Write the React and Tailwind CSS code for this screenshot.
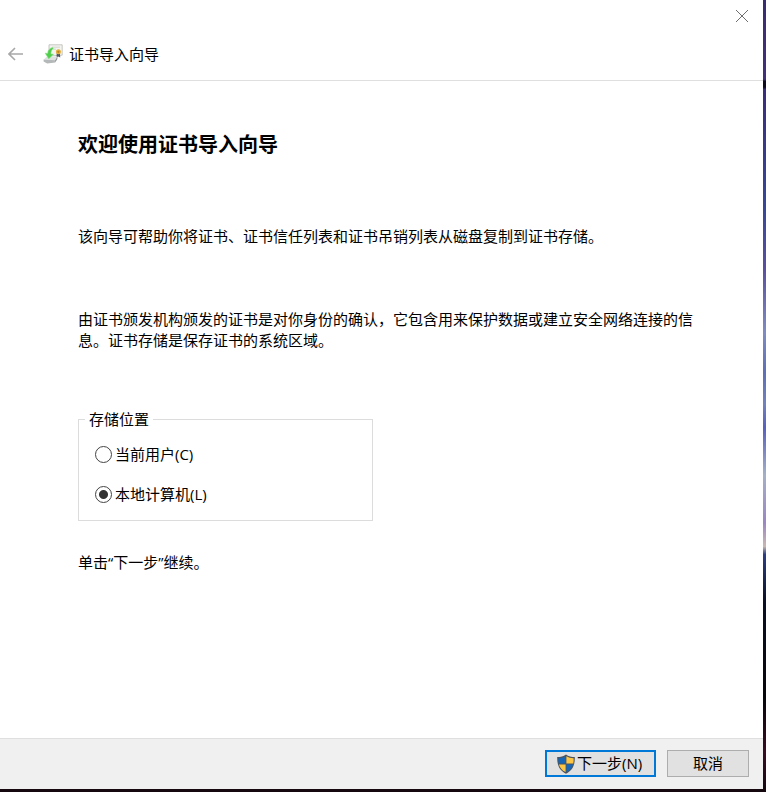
import { useState } from 'react';

const STORES = [
  { id: 'user', label: '当前用户(C)' },
  { id: 'machine', label: '本地计算机(L)' },
];

function BackIcon() {
  return (
    <svg className="w-4 h-4" viewBox="0 0 16 16" fill="none" stroke="#a8a8a8" strokeWidth="1.6">
      <path d="M15 8H1M7 2L1 8l6 6" />
    </svg>
  );
}

function CloseIcon() {
  return (
    <svg className="w-3 h-3" viewBox="0 0 12 12" fill="none" stroke="#6e6e6e" strokeWidth="1">
      <path d="M0 0l12 12M12 0L0 12" />
    </svg>
  );
}

// Certificate with a green import arrow over a drive
function CertificateIcon() {
  return (
    <svg className="w-5 h-5" viewBox="0 0 20 20">
      <path d="M6 .8h13.2v10.4L6 12z" fill="#f3f3ef" stroke="#b9b9b4" strokeWidth=".8" />
      <path d="M9 3.2h8M10 5.2h3" stroke="#c9c9c4" strokeWidth=".7" />
      <path d="M13.8 9l-.4 4.6 1.9-1.2 2 1.1-.5-4.5z" fill="#4e5663" />
      <circle cx="15.4" cy="7.8" r="2.5" fill="#e3ae3c" />
      <circle cx="15.4" cy="7.8" r="1.1" fill="#b98120" />
      <path d="M.6 15.4L4 12.4h10.4l-2.2 3.8z" fill="#dfe1e1" />
      <path d="M.6 15.4l11.6.8v2.4l-8 .8-3.6-2z" fill="#b4b8b9" />
      <path d="M12.2 16.2l2.2-3.8v2.6l-2.2 3.6z" fill="#8c9193" />
      <path d="M9.4 3.4C6.4 4.4 4.8 6.6 4.7 9.4l-2.5-.2 3.6 5.6 4.6-4.6-2.5-.1c-.1-2.500.7-4.300 2.300-5.500z" fill="#4fce4b" stroke="#7fdd7b" strokeWidth=".6" />
    </svg>
  );
}

function ShieldIcon() {
  return (
    <svg className="w-5 h-5 shrink-0" viewBox="0 0 20 20">
      <path d="M10 .4c2.6 1.9 5.4 2.6 8.8 2.7C19 10.8 16.6 16.6 10 19.7 3.4 16.6 1 10.8 1.2 3.1 4.6 3 7.4 2.3 10 .4z" fill="#4c5560" />
      <path d="M9.6 2.2v7.4H2.7c-.3-1.7-.4-3.3-.3-5.3 2.9-.2 5.1-.8 7.2-2.1z" fill="#1766b5" />
      <path d="M10.4 2.2c2.1 1.3 4.3 1.9 7.2 2.1.1 2 0 3.6-.3 5.3h-6.9z" fill="#fcc544" />
      <path d="M2.9 10.4h6.7v7.7c-3.7-1.9-5.7-4.5-6.7-7.7z" fill="#fcc544" />
      <path d="M17.1 10.4h-6.7v7.7c3.7-1.9 5.7-4.5 6.7-7.7z" fill="#1766b5" />
    </svg>
  );
}

export default function App() {
  const [store, setStore] = useState('machine');

  return (
    <div className="min-h-screen flex flex-col pr-[3px] pb-[3px] bg-[linear-gradient(180deg,#3a2c72_0%,#41307a_10%,#0c0b20_10.3%,#0c0b20_11%,#3b2c7c_11.3%,#36479a_26%,#5a4fa2_34%,#7f8cc4_42%,#5c6fb8_47%,#7282bd_51%,#5860c0_54%,#a5b0c8_60%,#9a86c4_66%,#c8b8b0_69%,#2c3f86_70%,#0a0f24_76%,#07060c_88%,#3a0c20_95%,#14080f_100%)] font-['Open_Sans','Noto_Sans_CJK_SC',sans-serif] text-[15px] leading-[21px] text-black">
      <div className="flex-1 flex flex-col bg-white">
        {/* Title bar */}
        <header className="border-b border-[#dfdfdf]">
          <div className="flex justify-end h-8">
            <button type="button" aria-label="关闭" className="flex items-center justify-center w-[42px]">
              <CloseIcon />
            </button>
          </div>
          <div className="flex items-center h-12 px-2 pb-1">
            <button type="button" aria-label="返回" className="mr-[19px]">
              <BackIcon />
            </button>
            <CertificateIcon />
            <span className="ml-1.5">证书导入向导</span>
          </div>
        </header>

        <main className="flex-1 pl-[78px] pr-16">
          <h1 className="mt-12 text-xl leading-8 font-bold">欢迎使用证书导入向导</h1>

          <p className="mt-[65px]">该向导可帮助你将证书、证书信任列表和证书吊销列表从磁盘复制到证书存储。</p>

          <p className="mt-[62px]">
            由证书颁发机构颁发的证书是对你身份的确认，它包含用来保护数据或建立安全网络连接的信息。证书存储是保存证书的系统区域。
          </p>

          <fieldset className="mt-[58px] w-[295px] border border-[#dcdcdc] pl-1.5 pb-[15px]">
            <legend className="px-1">存储位置</legend>
            <div className="flex flex-col gap-[19px] pt-3.5 pl-2.5">
              {STORES.map((s) => (
                <label key={s.id} className="flex items-center gap-[3px]">
                  <input
                    type="radio"
                    name="store"
                    value={s.id}
                    checked={store === s.id}
                    onChange={() => setStore(s.id)}
                    className="appearance-none w-[17px] h-[17px] rounded-full border border-[#444444] bg-white checked:bg-[radial-gradient(circle,#333333_4px,white_5px)]"
                  />
                  {s.label}
                </label>
              ))}
            </div>
          </fieldset>

          <p className="mt-[31px]">单击“下一步”继续。</p>
        </main>

        <footer className="flex justify-end gap-[11px] border-t border-[#dfdfdf] bg-[#f0f0f0] pt-[11px] pb-3 pr-3.5">
          <button type="button" className="flex items-center gap-px w-[111px] h-[27px] pl-[9px] border-2 border-[#0078d7] bg-[#e1e1e1]">
            <ShieldIcon />
            下一步(N)
          </button>
          <button type="button" className="w-[82px] h-[27px] border border-[#adadad] bg-[#e1e1e1]">
            取消
          </button>
        </footer>
      </div>
    </div>
  );
}
